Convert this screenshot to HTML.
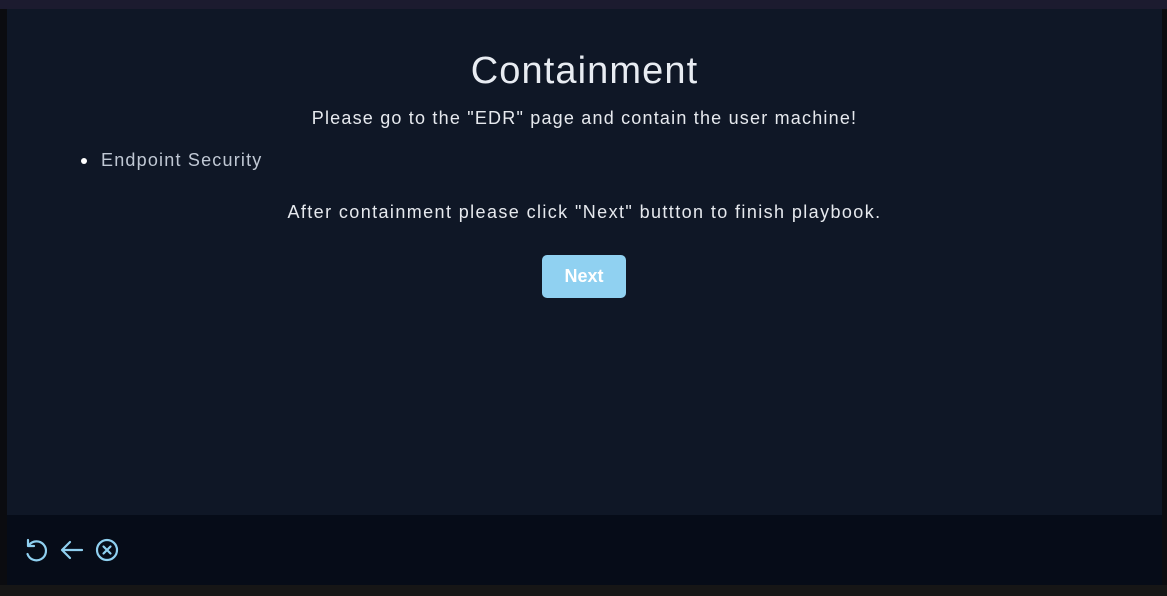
<!DOCTYPE html>
<html><head><style>
html,body{margin:0;padding:0;width:1167px;height:596px;overflow:hidden;background:#0b0c10;font-family:"Liberation Sans",sans-serif;}
.top{position:absolute;left:0;top:0;width:1167px;height:9px;background:#1c1b2f;}
.panel{position:absolute;left:7px;top:9px;width:1155px;height:506px;background:#0f1726;}
.foot{position:absolute;left:7px;top:515px;width:1155px;height:70px;background:#060c18;}
.bot{position:absolute;left:0;top:585px;width:1167px;height:11px;background:#161616;}
h1{position:absolute;left:0;width:1155px;top:41px;margin:0;text-align:center;font-weight:normal;font-size:38px;letter-spacing:1.1px;color:#e8ecf2;}
.p1{position:absolute;left:0;width:1155px;top:99px;text-align:center;font-size:18px;letter-spacing:1.2px;color:#e6e9ee;}
.li{position:absolute;left:94px;top:141px;font-size:18px;letter-spacing:1.2px;color:#c0c8d4;}
.dot{position:absolute;left:74px;top:149px;width:6px;height:6px;border-radius:50%;background:#fff;}
.p2{position:absolute;left:0;width:1155px;top:193px;text-align:center;font-size:18px;letter-spacing:1.4px;color:#e6e9ee;}
.btn{position:absolute;left:535px;top:246px;width:84px;height:43px;border-radius:5px;background:#90d1f1;color:#fff;font-size:18px;font-weight:bold;text-align:center;line-height:42px;}
</style></head><body>
<div class="top"></div>
<div class="panel">
<h1>Containment</h1>
<div class="p1">Please go to the "EDR" page and contain the user machine!</div>
<div class="dot"></div><div class="li">Endpoint Security</div>
<div class="p2">After containment please click "Next" buttton to finish playbook.</div>
<div class="btn">Next</div>
</div>
<div class="foot">
<svg width="120" height="70" style="position:absolute;left:0;top:0" fill="none" stroke="#8fd0f0" stroke-width="2.2" stroke-linecap="round" stroke-linejoin="round">
<path d="M22 30 A9.5 9.5 0 1 1 20.5 39"/><path d="M21 25 V31 H27"/>
<path d="M56 35 H75 M63 27 L55 35 L63 43"/>
<circle cx="100" cy="35" r="10"/><path d="M96.5 31.5 L103.5 38.5 M103.5 31.5 L96.5 38.5"/>
</svg>
</div>
<div class="bot"></div>
</body></html>
